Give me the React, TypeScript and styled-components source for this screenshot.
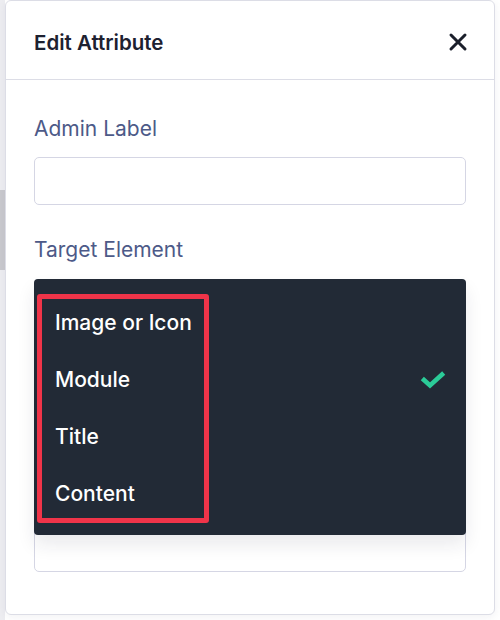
import React from 'react';
import styled, { createGlobalStyle } from 'styled-components';

const GlobalStyle = createGlobalStyle`
  html, body {
    margin: 0;
    padding: 0;
    background: #f6f6f8;
  }
  body {
    font-family: Inter, "Noto Sans", "Liberation Sans", sans-serif;
    -webkit-font-smoothing: antialiased;
  }
  * { box-sizing: border-box; }
`;

const options = ['Image or Icon', 'Module', 'Title', 'Content'];
const selected = 'Module';

const CheckIcon = () => (
  <svg width="26" height="20" viewBox="0 0 26 20" fill="none">
    <path
      d="M4 10 L10 15.5 L22 4.5"
      stroke="#2bcb98"
      strokeWidth="4.6"
      strokeLinecap="square"
      strokeLinejoin="miter"
    />
  </svg>
);

const CloseIcon = () => (
  <svg width="20" height="20" viewBox="0 0 20 20" fill="none">
    <path
      d="M3 3 L17 17 M17 3 L3 17"
      stroke="#1b1f2b"
      strokeWidth="3"
      strokeLinecap="round"
    />
  </svg>
);

const App = () => {
  return (
    <>
      <GlobalStyle />
      <Page>
        <SideStrip />
        <Modal>
          <Header>
            <Title>Edit Attribute</Title>
            <CloseButton aria-label="Close">
              <CloseIcon />
            </CloseButton>
          </Header>

          <Body>
            <Field>
              <Label>Admin Label</Label>
              <Input />
            </Field>

            <Field>
              <Label>Target Element</Label>
              <SelectBox>
                <Dropdown>
                  {options.map(option => (
                    <Option key={option}>
                      <span>{option}</span>
                      {option === selected && <CheckIcon />}
                    </Option>
                  ))}
                  <Highlight />
                </Dropdown>
              </SelectBox>
            </Field>
          </Body>
        </Modal>
      </Page>
    </>
  );
};

export default App;

const Page = styled.div`
  position: relative;
  width: 500px;
  height: 620px;
  padding: 0 5px;
  overflow: hidden;
  background: linear-gradient(to right, #ededf1 0 5px, #ffffff 5px);
`;
const SideStrip = styled.div`
  position: absolute;
  left: 0;
  top: 190px;
  width: 5px;
  height: 80px;
  background: #c9c9ce;
`;
const Modal = styled.section`
  position: relative;
  height: 615px;
  background: #ffffff;
  border: 1px solid #dcdde6;
  border-radius: 6px;
  box-shadow: 0 2px 8px rgba(30, 35, 60, 0.06);
  display: flex;
  flex-direction: column;
`;
const Header = styled.header`
  height: 79px;
  padding: 4px 22px 0 28px;
  border-bottom: 1px solid #dcdde6;
  display: flex;
  align-items: center;
  justify-content: space-between;
`;
const Title = styled.h2`
  margin: 0;
  font-size: 20.5px;
  font-weight: 600;
  color: #1d2130;
`;
const CloseButton = styled.button`
  border: 0;
  background: none;
  padding: 4px;
  display: flex;
  cursor: pointer;
`;
const Body = styled.main`
  padding: 37px 28px 0 28px;
  display: flex;
  flex-direction: column;
  gap: 33px;
`;
const Field = styled.div`
  display: flex;
  flex-direction: column;
  gap: 16px;
`;
const Label = styled.label`
  font-size: 21px;
  line-height: 24px;
  color: #4d5a88;
`;
const Input = styled.input`
  height: 48px;
  border: 1px solid #d5d6e4;
  border-radius: 5px;
  font: inherit;
  padding: 0 12px;
  outline: none;
`;
const SelectBox = styled.div`
  position: relative;
  margin-top: 1px;
  height: 293px;
  border: 1px solid #d5d6e4;
  border-radius: 5px;
`;
const Dropdown = styled.ul`
  position: absolute;
  left: -1px;
  right: -1px;
  top: -1px;
  height: 256px;
  margin: 0;
  padding: 15px 0 13px 0;
  list-style: none;
  background: #222a36;
  border-radius: 4px;
  box-shadow: 0 10px 18px rgba(30, 35, 60, 0.09);
`;
const Option = styled.li`
  height: 57px;
  padding: 0 20px 0 21px;
  display: flex;
  align-items: center;
  justify-content: space-between;
  font-size: 21px;
  font-weight: 500;
  color: #ffffff;
`;
const Highlight = styled.div`
  position: absolute;
  left: 3px;
  top: 15px;
  width: 172px;
  height: 229px;
  border: 5px solid #f03449;
  border-radius: 3px;
  pointer-events: none;
`;
